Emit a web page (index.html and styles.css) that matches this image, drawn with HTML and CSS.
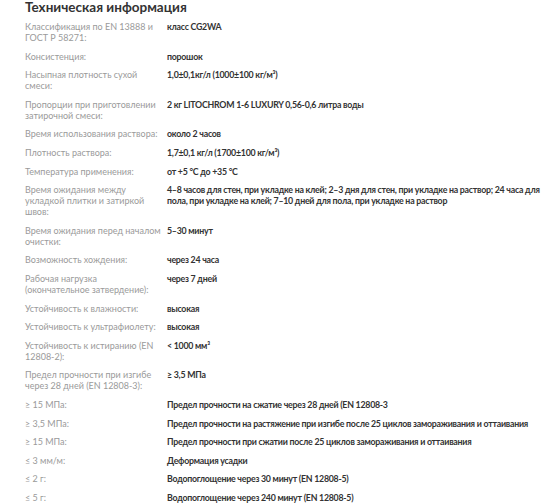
FILE: index.html
```html
<!DOCTYPE html>
<html lang="ru">
<head>
<meta charset="utf-8">
<link rel="stylesheet" href="styles.css">
</head>
<body>
<section class="tech">
  <h2 class="tech-title">Техническая информация</h2>
  <dl class="spec">
    <dt>Классификация по EN 13888 и ГОСТ Р 58271:</dt><dd>класс CG2WA</dd>
    <dt>Консистенция:</dt><dd>порошок</dd>
    <dt>Насыпная плотность сухой смеси:</dt><dd>1,0±0,1кг/л (1000±100 кг/м³)</dd>
    <dt>Пропорции при приготовлении затирочной смеси:</dt><dd>2 кг LITOCHROM 1-6 LUXURY 0,56-0,6 литра воды</dd>
    <dt>Время использования раствора:</dt><dd>около 2 часов</dd>
    <dt>Плотность раствора:</dt><dd>1,7±0,1 кг/л (1700±100 кг/м³)</dd>
    <dt>Температура применения:</dt><dd>от +5 °C до +35 °C</dd>
    <dt>Время ожидания между укладкой плитки и затиркой швов:</dt><dd>4–8 часов для стен, при укладке на клей; 2–3 дня для стен, при укладке на раствор; 24 часа для пола, при укладке на клей; 7–10 дней для пола, при укладке на раствор</dd>
    <dt>Время ожидания перед началом очистки:</dt><dd>5–30 минут</dd>
    <dt>Возможность хождения:</dt><dd>через 24 часа</dd>
    <dt>Рабочая нагрузка (окончательное затвердение):</dt><dd>через 7 дней</dd>
    <dt>Устойчивость к влажности:</dt><dd>высокая</dd>
    <dt>Устойчивость к ультрафиолету:</dt><dd>высокая</dd>
    <dt>Устойчивость к истиранию (EN 12808-2):</dt><dd>&lt; 1000 мм³</dd>
    <dt>Предел прочности при изгибе через 28 дней (EN 12808-3):</dt><dd>≥ 3,5 МПа</dd>
    <dt>≥ 15 МПа:</dt><dd>Предел прочности на сжатие через 28 дней (EN 12808-3</dd>
    <dt>≥ 3,5 МПа:</dt><dd>Предел прочности на растяжение при изгибе после 25 циклов замораживания и оттаивания</dd>
    <dt>≥ 15 МПа:</dt><dd>Предел прочности при сжатии после 25 циклов замораживания и оттаивания</dd>
    <dt>≤ 3 мм/м:</dt><dd>Деформация усадки</dd>
    <dt>≤ 2 г:</dt><dd>Водопоглощение через 30 минут (EN 12808-5)</dd>
    <dt>≤ 5 г:</dt><dd>Водопоглощение через 240 минут (EN 12808-5)</dd>
  </dl>
</section>
</body>
</html>
```

FILE: styles.css
```css
html, body {
  margin: 0;
  padding: 0;
  background: #ffffff;
}

body {
  font-family: "Lato", "Noto Sans", sans-serif;
}

.tech {
  width: 515px;
  padding: 0 0 0 25px;
}

.tech-title {
  margin: 0;
  font-size: 13.5px;
  line-height: 14px;
  font-weight: 700;
  color: #333333;
}

.spec {
  margin: 7px 0 0 0;
  display: grid;
  grid-template-columns: 142px 1fr;
  row-gap: 7.6px;
  font-size: 9px;
  line-height: 11px;
}

.spec dt {
  margin: 0;
  color: #9a9a9a;
  padding-right: 4px;
}

.spec dd {
  margin: 0;
  color: #333333;
  font-weight: 700;
  font-size: 8.8px;
  letter-spacing: -0.25px;
}
```
